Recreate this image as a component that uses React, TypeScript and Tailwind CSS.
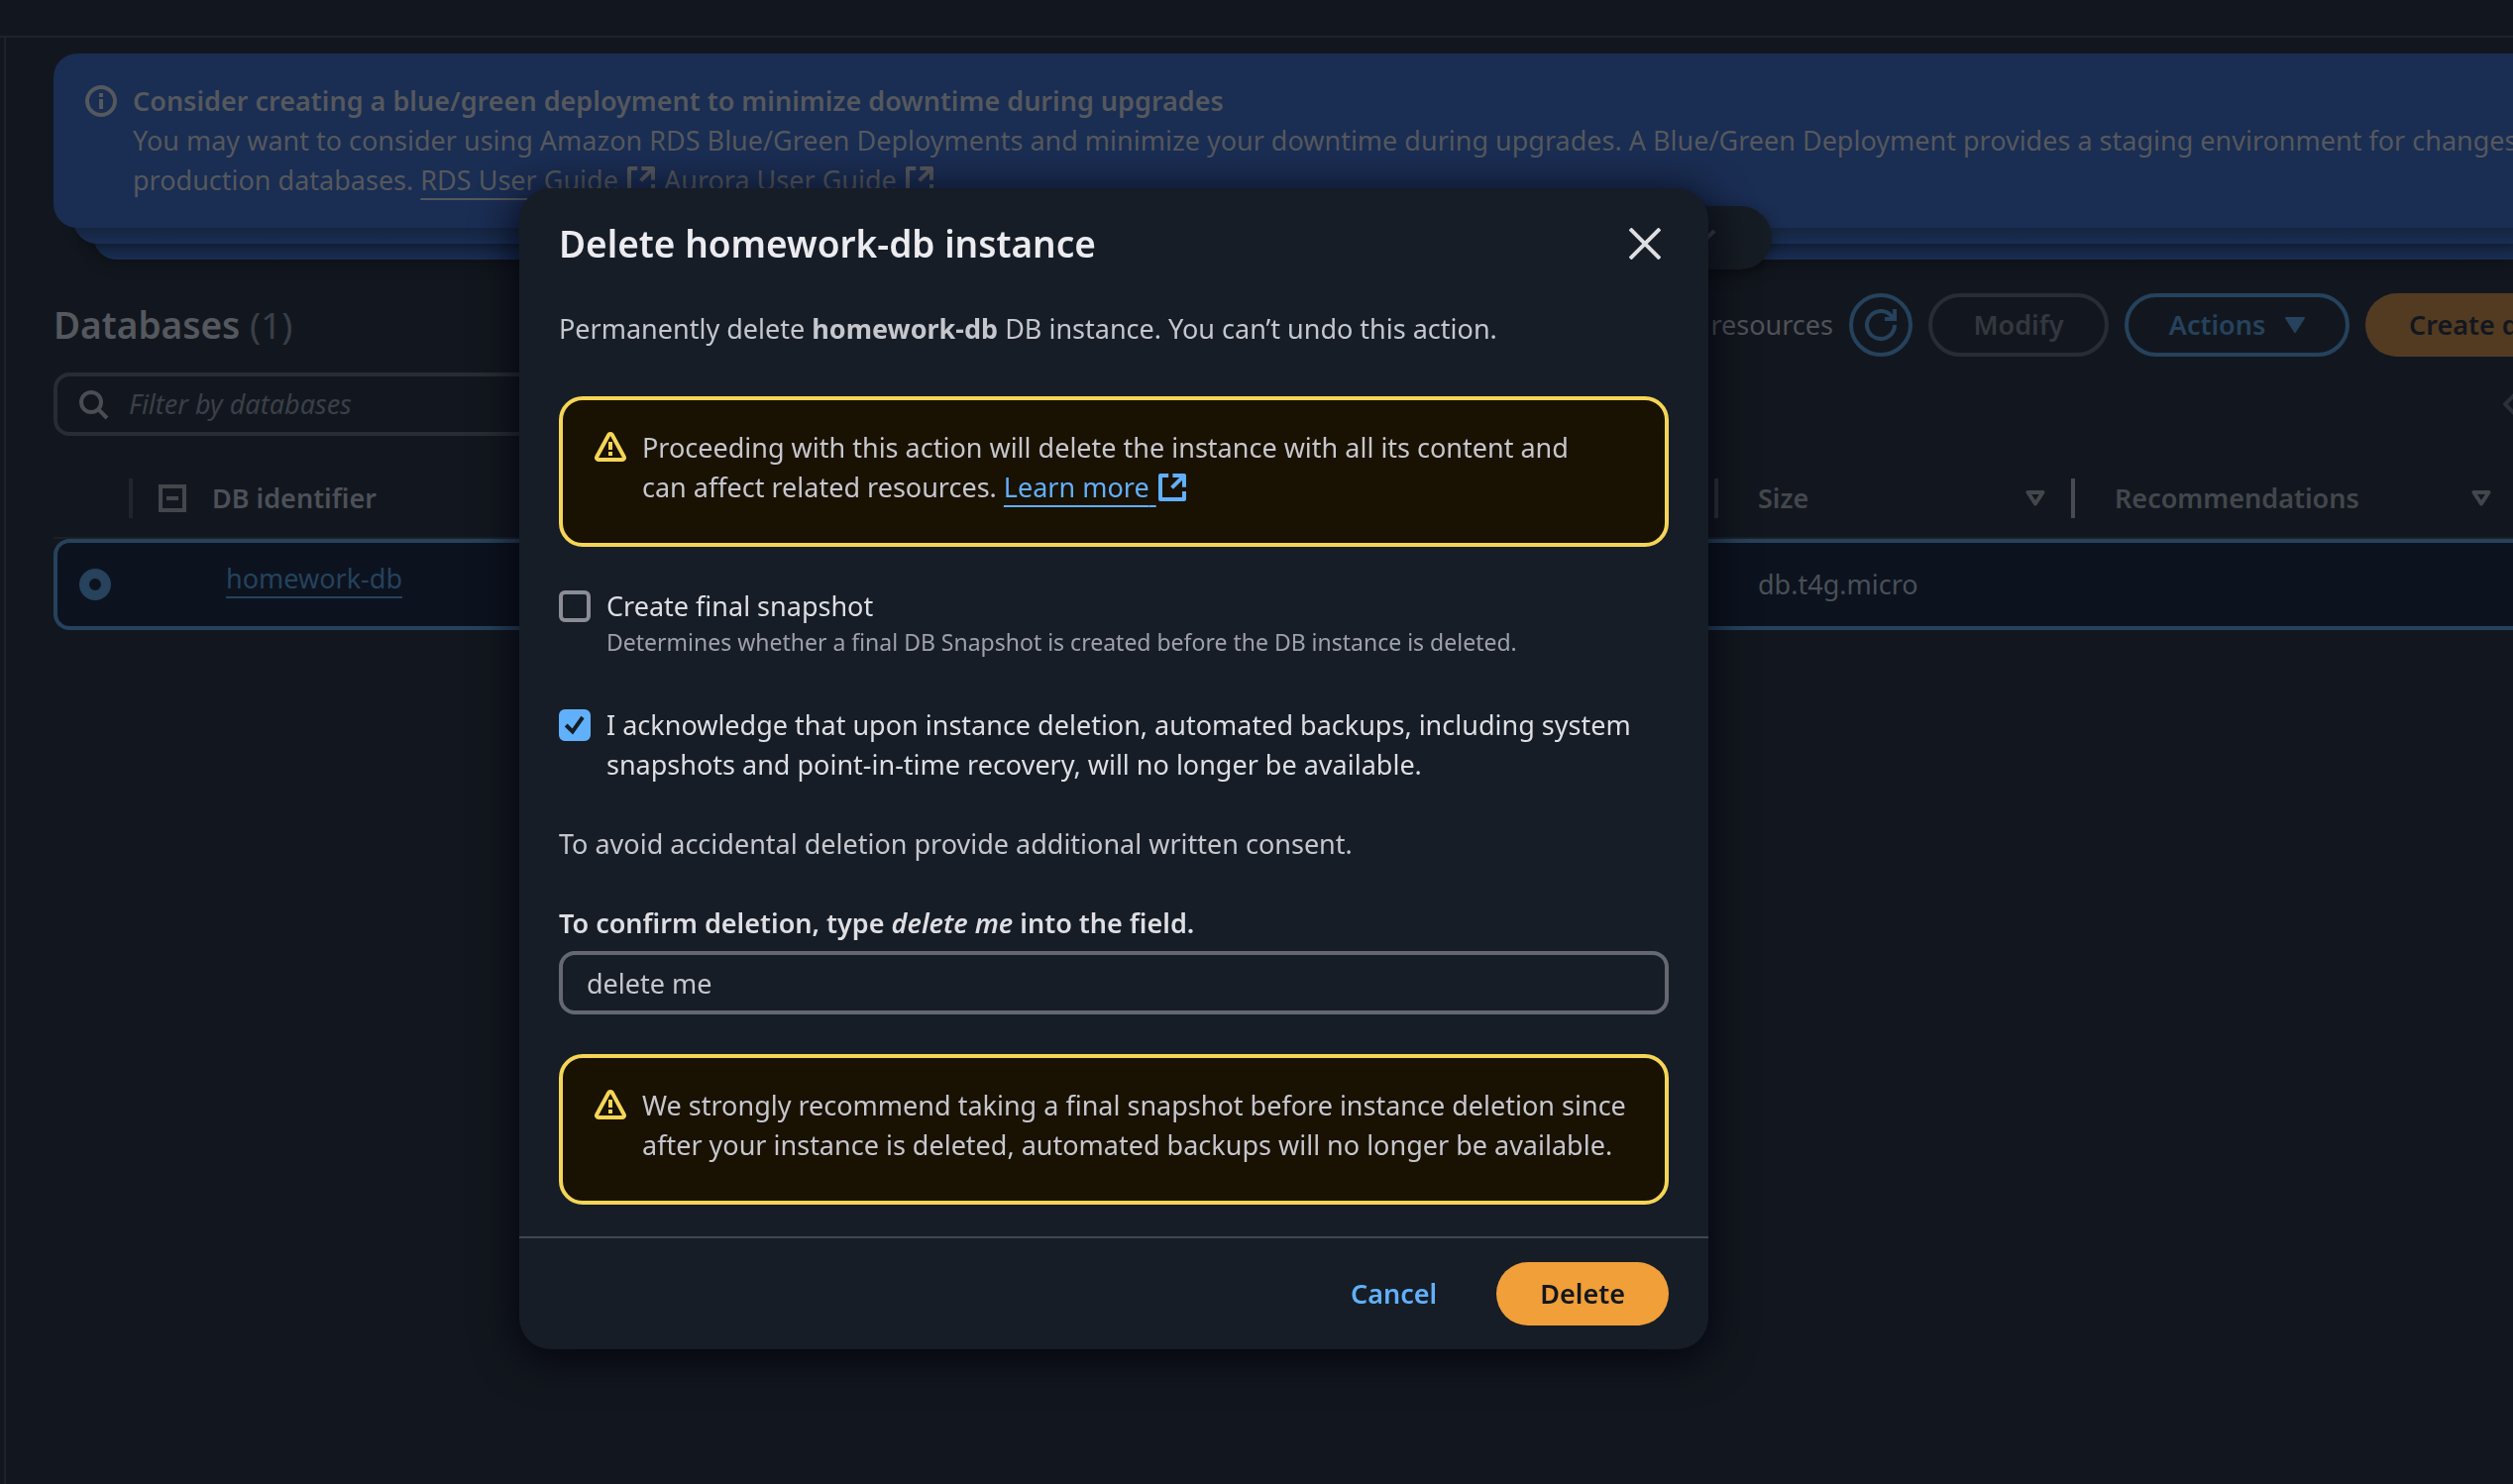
import { useState, type ReactNode } from "react";

function ExternalIcon() {
  return (
    <svg viewBox="0 0 16 16" className="inline-block size-8 align-[-6px]" fill="none" stroke="currentColor" strokeWidth="2" aria-hidden="true">
      <path d="M14 10V14H2V2H6.1" strokeLinejoin="round" />
      <path d="M8.2 2H14V7.9" strokeLinejoin="round" />
      <path d="M7.8 8.2L13.6 2.4" />
    </svg>
  );
}

function ExternalLink({ href, children }: { href: string; children: ReactNode }) {
  return (
    <a href={href} className="whitespace-nowrap underline decoration-2 underline-offset-8 [text-decoration-skip-ink:none]">
      {children} <ExternalIcon />
    </a>
  );
}

function WarningIcon() {
  return (
    <svg viewBox="0 0 16 16" className="mt-1 size-8 shrink-0 text-[#f5d556]" fill="none" stroke="currentColor" strokeWidth="2" aria-hidden="true">
      <path d="M7.12 1.52L1.14 12.5A1 1 0 0 0 2.02 14h11.96a1 1 0 0 0 .88-1.5L8.88 1.52a1 1 0 0 0-1.76 0Z" strokeLinejoin="round" />
      <path d="M8 5v4M8 10v2" />
    </svg>
  );
}

function InfoIcon() {
  return (
    <svg viewBox="0 0 16 16" className="mt-1 size-8 shrink-0" fill="none" stroke="currentColor" strokeWidth="2" aria-hidden="true">
      <circle cx="8" cy="8" r="7" />
      <path d="M8 7v5M8 4v2" />
    </svg>
  );
}

function SortIcon() {
  return (
    <svg viewBox="0 0 20 16" className="h-4 w-5" fill="none" stroke="currentColor" strokeWidth="4" strokeLinejoin="round" aria-hidden="true">
      <path d="M2.5 2h15L10 13.5z" />
    </svg>
  );
}

function Warning({ children }: { children: ReactNode }) {
  return (
    <div className="flex gap-4 rounded-3xl border-4 border-[#f5d556] bg-[#191102] px-8 pt-7 pb-9">
      <WarningIcon />
      <p>{children}</p>
    </div>
  );
}

type CheckProps = { checked: boolean; onChange: (v: boolean) => void; label: string; description?: string };

function Check({ checked, onChange, label, description }: CheckProps) {
  return (
    <label className="flex gap-4">
      <span className="mt-1 grid size-8 shrink-0">
        <input
          type="checkbox"
          checked={checked}
          onChange={(e) => onChange(e.target.checked)}
          className="col-start-1 row-start-1 size-8 appearance-none rounded-md border-4 border-[#8c8c94] checked:border-[#61b0fb] checked:bg-[#61b0fb]"
        />
        {checked && (
          <svg viewBox="0 0 16 16" className="pointer-events-none col-start-1 row-start-1 size-8 text-[#161d26]" fill="none" stroke="currentColor" strokeWidth="2" aria-hidden="true">
            <path d="M3.6 8l3.3 3.2L12 4" />
          </svg>
        )}
      </span>
      <span>
        <span className="block text-[#dedee3]">{label}</span>
        {description && <span className="block text-[23px] leading-8 text-[#a0a0aa]">{description}</span>}
      </span>
    </label>
  );
}

function Banner() {
  return (
    <section className="relative pl-12 text-[#55585d]">
      <div className="relative z-20 flex gap-4 overflow-hidden rounded-l-3xl bg-[#1a2d53] py-7 pl-8 whitespace-nowrap">
        <InfoIcon />
        <div>
          <h2 className="font-semibold">Consider creating a blue/green deployment to minimize downtime during upgrades</h2>
          <p>
            You may want to consider using Amazon RDS Blue/Green Deployments and minimize your downtime during upgrades. A Blue/Green Deployment provides a staging environment for changes
            <br />
            production databases. <ExternalLink href="#rds">RDS User Guide</ExternalLink> <ExternalLink href="#aurora">Aurora User Guide</ExternalLink>
          </p>
        </div>
      </div>
      <div className="relative z-10 -mt-6 ml-5 h-10 rounded-bl-3xl bg-linear-to-b from-[#152540] from-60% to-[#1a2d53] shadow-[0_2px_12px_rgba(0,0,0,0.3)]" />
      <div className="relative -mt-6 ml-10 h-10 rounded-bl-3xl bg-linear-to-b from-[#152540] from-60% to-[#1a2d53] shadow-[0_4px_16px_rgba(0,0,0,0.3)]" />
      <button
        type="button"
        aria-label="Show all notifications"
        className="absolute top-[154px] left-[1260px] z-30 flex h-16 w-[522px] items-center justify-end rounded-full bg-[#161c24] pr-14 shadow-[0_4px_16px_rgba(0,0,0,0.4)]"
      >
        <svg viewBox="0 0 16 16" className="size-8 text-[#3c4149]" fill="none" stroke="currentColor" strokeWidth="2" aria-hidden="true">
          <path d="M1 4.5l7 7 7-7" />
        </svg>
      </button>
    </section>
  );
}

function Databases() {
  return (
    <section className="pt-[34px] pl-12">
      <header className="flex items-center justify-between gap-4">
        <h1 className="text-[37px] leading-[48px] font-semibold text-[#55585e]">
          Databases <span className="font-normal text-[#3b3f48]">(1)</span>
        </h1>
        <div className="flex items-center gap-4 font-semibold">
          <span className="font-normal text-[#4f525a]">Group resources</span>
          <button type="button" aria-label="Refresh" className="grid size-16 place-items-center rounded-full border-4 border-[#26425c] text-[#26425c]">
            <svg viewBox="0 0 16 16" className="size-8" fill="none" stroke="currentColor" strokeWidth="2" aria-hidden="true">
              <path d="M15 8a7 7 0 1 1-2.2-5.1L14.6 5" />
              <path d="M10 5h5V0" />
            </svg>
          </button>
          <button type="button" disabled className="h-16 w-[182px] rounded-full border-4 border-[#282c35] text-[#34373f]">Modify</button>
          <button type="button" className="flex h-16 w-[227px] items-center justify-center gap-5 rounded-full border-4 border-[#26425c] text-[#26425c]">
            Actions
            <svg viewBox="0 0 20 16" className="h-4 w-5" fill="currentColor" stroke="currentColor" strokeWidth="2" strokeLinejoin="round" aria-hidden="true">
              <path d="M1 1h18L10 15z" />
            </svg>
          </button>
          <button type="button" className="h-16 w-[149px] overflow-hidden rounded-l-full bg-[#533b22] pl-11 text-left whitespace-nowrap text-[#12171f]">Create database</button>
        </div>
      </header>
      <div className="flex items-center justify-between pt-4">
        <label className="flex h-16 w-[900px] items-center gap-5 rounded-2xl border-4 border-[#282c35] px-5">
          <svg viewBox="0 0 16 16" className="size-8 shrink-0 text-[#4a4d53]" fill="none" stroke="currentColor" strokeWidth="2" aria-hidden="true">
            <circle cx="7" cy="7" r="5" />
            <path d="M10.6 10.6L15 15" />
          </svg>
          <input type="text" aria-label="Filter by databases" placeholder="Filter by databases" className="w-full bg-transparent outline-none placeholder:text-[#3b3f48] placeholder:italic" />
        </label>
        <button type="button" aria-label="Previous page" className="overflow-hidden text-[#2c3039]">
          <svg viewBox="0 0 10 32" className="h-8 w-[10px]" fill="none" stroke="currentColor" strokeWidth="4" aria-hidden="true">
            <path d="M16 2L2 16l14 14" />
          </svg>
        </button>
      </div>
      <table className="mt-5 w-full table-fixed border-separate border-spacing-0 text-left">
        <thead>
          <tr className="h-[84px] text-[#43474c] [&>th]:border-b-2 [&>th]:border-[#1c2128] [&>th]:pt-1 [&>th]:font-semibold">
            <th className="w-20">
              <span className="ml-auto block h-10 w-1 bg-[#21262d]" />
            </th>
            <th className="pl-6">
              <span className="flex items-center gap-6">
                <svg viewBox="0 0 32 32" className="size-8" fill="none" stroke="currentColor" strokeWidth="4" aria-hidden="true">
                  <path d="M4 4h24v24H4zM10 16h12" />
                </svg>
                <span className="text-[#4d5057]">DB identifier</span>
              </span>
            </th>
            <th className="w-[360px]">
              <span className="flex items-center gap-10">
                <span className="h-10 w-1 bg-[#31353e]" />
                <span className="flex grow items-center justify-between pr-[26px]">Size <SortIcon /></span>
              </span>
            </th>
            <th className="w-[446px]">
              <span className="flex items-center gap-10">
                <span className="h-10 w-1 bg-[#484b54]" />
                <span className="flex grow items-center justify-between pr-[22px]">Recommendations <SortIcon /></span>
              </span>
            </th>
          </tr>
        </thead>
        <tbody>
          <tr className="h-[92px] bg-[#0c131f] [&>td]:border-y-4 [&>td]:border-[#26425c]">
            <td className="rounded-l-2xl border-l-4 pl-[22px]">
              <input type="radio" name="db" aria-label="homework-db" defaultChecked className="block size-8 appearance-none rounded-full border-[10px] border-[#26425c]" />
            </td>
            <td className="pb-3 pl-[94px]">
              <a href="#homework-db" className="text-[#26425c] underline decoration-2 underline-offset-8">homework-db</a>
            </td>
            <td className="pl-11 text-[#4b4f56]">db.t4g.micro</td>
            <td />
          </tr>
        </tbody>
      </table>
    </section>
  );
}

function DeleteDialog() {
  const [snapshot, setSnapshot] = useState(false);
  const [ack, setAck] = useState(true);
  const [text, setText] = useState("delete me");
  return (
    <div className="fixed inset-0 z-40 overflow-y-auto pt-[190px] pl-[524px]">
      <div role="dialog" aria-labelledby="dialog-title" className="max-w-[1200px] rounded-[32px] bg-[#161d26] text-[#c6c6cd] shadow-[0_8px_40px_6px_rgba(0,0,10,0.7)]">
        <header className="flex items-center justify-between px-10 pt-8">
          <h2 id="dialog-title" className="text-[37px] leading-[48px] font-semibold text-[#ebebf0]">Delete homework-db instance</h2>
          <button type="button" aria-label="Close" className="grid size-12 place-items-center text-[#dedee3]">
            <svg viewBox="0 0 32 32" className="size-8" fill="none" stroke="currentColor" strokeWidth="4" aria-hidden="true">
              <path d="M1 1l30 30M31 1L1 31" />
            </svg>
          </button>
        </header>
        <div className="flex flex-col gap-10 px-10 pt-[42px] pb-8">
          <p className="pb-2">
            Permanently delete <b>homework-db</b> DB instance. You can’t undo this action.
          </p>
          <Warning>
            Proceeding with this action will delete the instance with all its content and
            <br />
            can affect related resources.{" "}
            <span className="text-[#61b0fb]">
              <ExternalLink href="#learn">Learn more</ExternalLink>
            </span>
          </Warning>
          <div className="flex flex-col gap-12">
            <Check checked={snapshot} onChange={setSnapshot} label="Create final snapshot" description="Determines whether a final DB Snapshot is created before the DB instance is deleted." />
            <Check checked={ack} onChange={setAck} label="I acknowledge that upon instance deletion, automated backups, including system snapshots and point-in-time recovery, will no longer be available." />
          </div>
          <p>To avoid accidental deletion provide additional written consent.</p>
          <div className="flex flex-col gap-2">
            <label htmlFor="confirm" className="font-semibold text-[#dedee3]">
              To confirm deletion, type <i>delete me</i> into the field.
            </label>
            <input id="confirm" type="text" value={text} onChange={(e) => setText(e.target.value)} className="h-16 w-full rounded-2xl border-4 border-[#656871] bg-transparent px-6 outline-none" />
          </div>
          <Warning>We strongly recommend taking a final snapshot before instance deletion since after your instance is deleted, automated backups will no longer be available.</Warning>
        </div>
        <footer className="flex justify-end gap-4 border-t-2 border-[#424650] px-10 py-6 font-semibold">
          <button type="button" className="h-16 px-11 text-[#61b0fb]">Cancel</button>
          <button type="button" className="h-16 rounded-full bg-[#f09f39] px-11 text-[#12171f]">Delete</button>
        </footer>
      </div>
    </div>
  );
}

export default function App() {
  return (
    <div className="min-h-screen overflow-hidden bg-[#12171f] font-['Noto_Sans',sans-serif] text-[27px] leading-10">
      <div className="h-9" />
      <div className="border-t-2 border-[#1e232b]">
        <main className="ml-1 min-h-[calc(100vh-38px)] border-l-2 border-[#1e232b] pt-4">
          <Banner />
          <Databases />
        </main>
      </div>
      <DeleteDialog />
    </div>
  );
}
